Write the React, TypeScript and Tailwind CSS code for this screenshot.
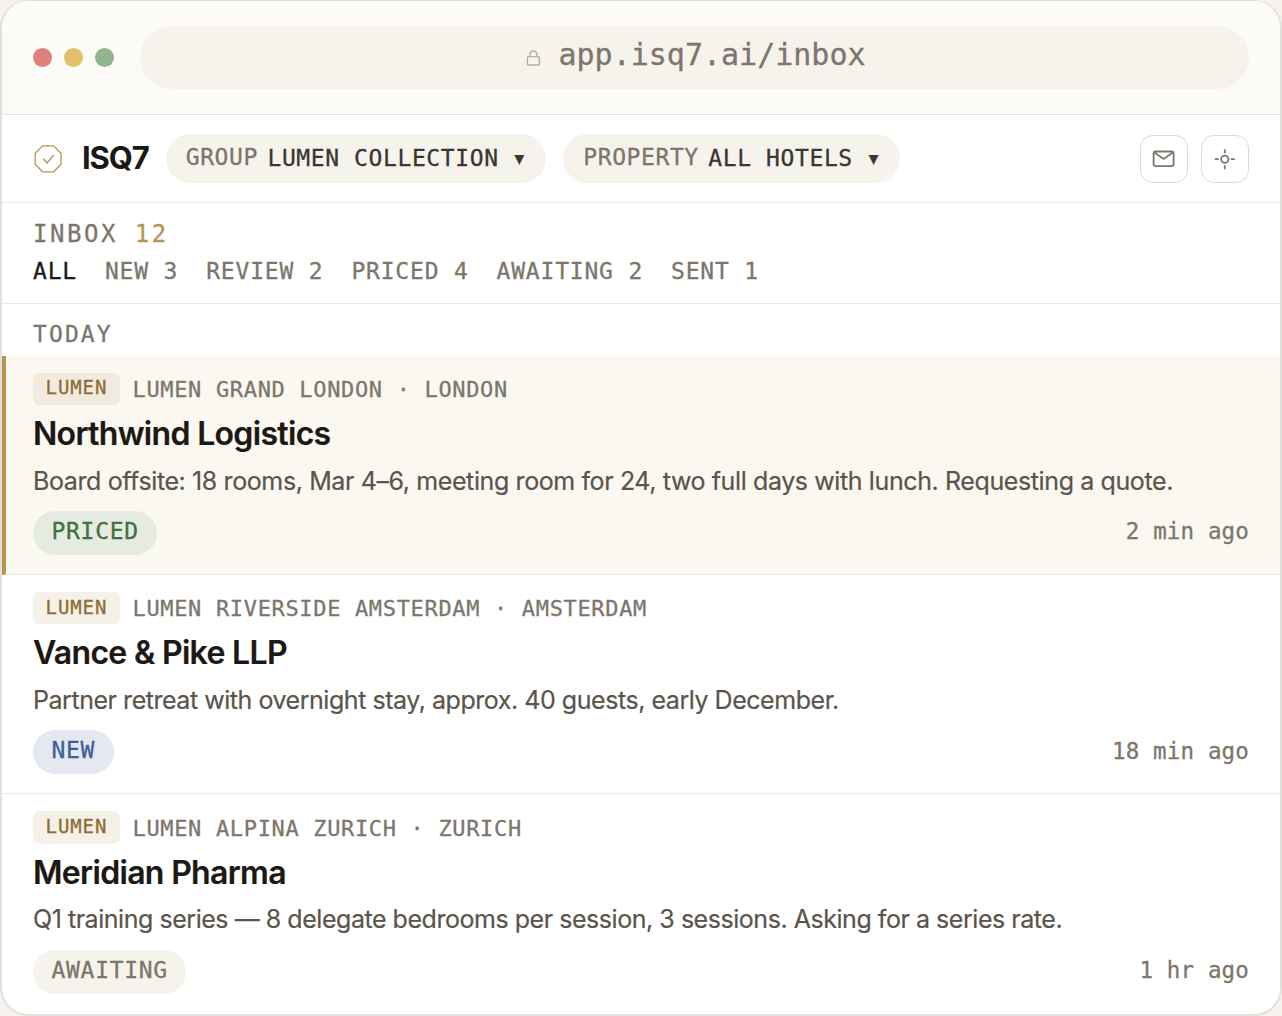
import clsx from 'clsx';

type Status = 'priced' | 'new' | 'awaiting';

interface Inquiry {
  brand: string;
  hotel: string;
  client: string;
  summary: string;
  status: Status;
  time: string;
  selected?: boolean;
}

const mono = "font-['DejaVu_Sans_Mono',monospace] [-webkit-text-stroke:0.3px]";

const tabs = ['ALL', 'NEW 3', 'REVIEW 2', 'PRICED 4', 'AWAITING 2', 'SENT 1'];

const inquiries: Inquiry[] = [
  {
    brand: 'LUMEN',
    hotel: 'LUMEN GRAND LONDON · LONDON',
    client: 'Northwind Logistics',
    summary: 'Board offsite: 18 rooms, Mar 4–6, meeting room for 24, two full days with lunch. Requesting a quote.',
    status: 'priced',
    time: '2 min ago',
    selected: true,
  },
  {
    brand: 'LUMEN',
    hotel: 'LUMEN RIVERSIDE AMSTERDAM · AMSTERDAM',
    client: 'Vance & Pike LLP',
    summary: 'Partner retreat with overnight stay, approx. 40 guests, early December.',
    status: 'new',
    time: '18 min ago',
  },
  {
    brand: 'LUMEN',
    hotel: 'LUMEN ALPINA ZURICH · ZURICH',
    client: 'Meridian Pharma',
    summary: 'Q1 training series — 8 delegate bedrooms per session, 3 sessions. Asking for a series rate.',
    status: 'awaiting',
    time: '1 hr ago',
  },
];

const statusStyles: Record<Status, string> = {
  priced: 'bg-[#e5ebe0] text-[#44703f]',
  new: 'bg-[#e3e8f1] text-[#3f5f95]',
  awaiting: 'bg-[#f6f3ec] text-[#7c766c]',
};

function LockIcon() {
  return (
    <svg width="18" height="18" viewBox="0 0 18 18" fill="none" stroke="#b3afa6" strokeWidth="1.4" className="mt-[1px]">
      <rect x="3.4" y="7.6" width="12" height="8.4" rx="1" />
      <path d="M6 7.6V5.4a3.4 3.4 0 0 1 6.8 0v2.2" />
    </svg>
  );
}

function LogoIcon() {
  return (
    <svg width="30" height="30" viewBox="0 0 30 30" fill="none" stroke="#b8954f" strokeWidth="1.3" className="mt-[2px]">
      <path d="M9.6 1.8h11l7.4 7.4v11l-7.4 7.6h-11l-7.4-7.6v-11z" />
      <path d="M10.2 14.8l4 4.2 6.4-8" strokeWidth="1.4" />
    </svg>
  );
}

function MailIcon() {
  return (
    <svg width="24" height="24" viewBox="0 0 24 24" fill="none" stroke="#7c766c" strokeWidth="1.8">
      <rect x="1.6" y="4.5" width="20" height="14.6" rx="1.8" />
      <path d="M2 5.2L11.6 12l9.6-6.8" />
    </svg>
  );
}

function TargetIcon() {
  return (
    <svg width="24" height="24" viewBox="0 0 24 24" fill="none" stroke="#7c766c" strokeWidth="1.8">
      <circle cx="11.8" cy="12.2" r="3.6" />
      <path d="M11.8 2.2v4M11.8 18.2v4M1.8 12.2h4M17.8 12.2h4" />
    </svg>
  );
}

function Selector({ label, value }: { label: string; value: string }) {
  return (
    <div className="flex h-[49.5px] items-center rounded-full bg-[#f6f3ec] pr-[21.5px] pl-[20px] text-[23px] leading-none tracking-[0.6px]">
      <span className="pb-[1px] text-[#7c766c]">{label}</span>
      <span className="ml-[9.5px] pt-[1px] text-[#3a3731]">{value}</span>
      <span className="ml-[16px] pt-[2px] text-[16px] tracking-normal text-[#3a3731]">▼</span>
    </div>
  );
}

function InquiryRow({ item }: { item: Inquiry }) {
  return (
    <article
      className={clsx(
        'h-[219.4px] shrink-0 border-b border-b-[#eae8e4] pt-[17px] pr-[31px] last:border-b-0',
        item.selected ? 'border-l-4 border-l-[#b8954f] bg-[#fbf8f1] pl-[27px]' : 'pl-[31px]',
      )}
    >
      <div className={clsx('flex h-[32.5px] items-center gap-[12.6px]', mono)}>
        <span
          className={clsx(
            'flex h-full items-center rounded-[7px] px-[12.6px] pb-[2px] text-[19px] leading-none tracking-[0.9px] text-[#8d6e35]',
            item.selected ? 'bg-[#f2eade]' : 'bg-[#f5f0e8]',
          )}
        >
          {item.brand}
        </span>
        <span className="pt-[2px] text-[22px] leading-none tracking-[0.03em] text-[#7c766c]">{item.hotel}</span>
      </div>
      <h2 className="mt-[9px] text-[32px] leading-[40px] font-semibold tracking-[-0.021em] text-[#1c1814] [-webkit-text-stroke:0.2px]">
        {item.client}
      </h2>
      <p
        className={clsx(
          'mt-[6.6px] text-[25px] leading-[40px] whitespace-nowrap text-[#5a544b] [-webkit-text-stroke:0.2px]',
          item.selected ? 'tracking-[-0.39px]' : 'tracking-[-0.46px]',
        )}
      >
        {item.summary}
      </p>
      <div className={clsx('mt-[10.3px] flex h-[44px] items-center justify-between text-[23px] leading-none', mono)}>
        <span
          className={clsx(
            'flex h-full items-center rounded-full px-[18.5px] pb-[3px] tracking-[0.7px]',
            statusStyles[item.status],
          )}
        >
          {item.status.toUpperCase()}
        </span>
        <span className="pb-[3px] text-[22.5px] tracking-[0.15px] text-[#7c766c]">{item.time}</span>
      </div>
    </article>
  );
}

export default function App() {
  return (
    <div className="h-[1016px] w-[1282px] overflow-hidden bg-[#f6f3ec] font-['Inter',sans-serif]">
      <div className="flex h-[1016px] flex-col overflow-hidden rounded-[28px] border-x-2 border-t border-b-2 border-[#e0dfdc] bg-white">
        {/* Browser chrome */}
        <div className="flex h-[113.5px] shrink-0 items-center border-b-[1.5px] border-[#e6e4e1] bg-[#fcfbf7] px-[31px]">
          <div className="flex gap-[12.2px]">
            <span className="size-[19px] rounded-full bg-[#e08079]" />
            <span className="size-[19px] rounded-full bg-[#e3bf6a]" />
            <span className="size-[19px] rounded-full bg-[#8fb78b]" />
          </div>
          <div className="ml-[25.7px] flex h-[63px] flex-1 items-center justify-center gap-[17px] rounded-full bg-[#f6f3ec]">
            <LockIcon />
            <span className={clsx('pb-[4px] text-[30px] leading-none text-[#7c766c]', mono)}>
              app.isq7.ai/inbox
            </span>
          </div>
        </div>

        {/* App header */}
        <header className="flex h-[88.5px] shrink-0 items-center border-b border-[#eae8e4] px-[31px]">
          <LogoIcon />
          <span className="ml-[19px] w-[83.7px] pb-[2px] text-[31px] leading-none font-bold tracking-[-0.035em] text-[#1c1814]">
            ISQ7
          </span>
          <div className={clsx('flex gap-[17.5px]', mono)}>
            <Selector label="GROUP" value="LUMEN COLLECTION" />
            <Selector label="PROPERTY" value="ALL HOTELS" />
          </div>
          <div className="mt-[2px] ml-auto flex gap-[13px]">
            <button type="button" aria-label="Mail" className="flex size-[48px] items-center justify-center rounded-[13px] border-[1.5px] border-[#dddbd7]">
              <MailIcon />
            </button>
            <button type="button" aria-label="Settings" className="flex size-[48px] items-center justify-center rounded-[13px] border-[1.5px] border-[#dddbd7]">
              <TargetIcon />
            </button>
          </div>
        </header>

        {/* Inbox heading and filters */}
        <section className={clsx('h-[101px] shrink-0 border-b border-[#eae8e4] px-[31px] pt-[15px] text-[#7c766c]', mono)}>
          <h1 className="text-[24px] leading-[32px] tracking-[0.105em]">
            INBOX <span className="text-[#b8954f]">12</span>
          </h1>
          <nav className="mt-[5px] flex gap-[28px] text-[23px] leading-[32px] tracking-[0.8px]">
            {tabs.map((tab, i) => (
              <span key={tab} className={i === 0 ? 'text-[#1c1814]' : undefined}>
                {tab}
              </span>
            ))}
          </nav>
        </section>

        <div className={clsx('h-[51.5px] shrink-0 px-[31px] pt-[14px] text-[23px] leading-[32px] tracking-[2.1px] text-[#7c766c]', mono)}>
          TODAY
        </div>

        {inquiries.map((item) => (
          <InquiryRow key={item.client} item={item} />
        ))}
      </div>
    </div>
  );
}
